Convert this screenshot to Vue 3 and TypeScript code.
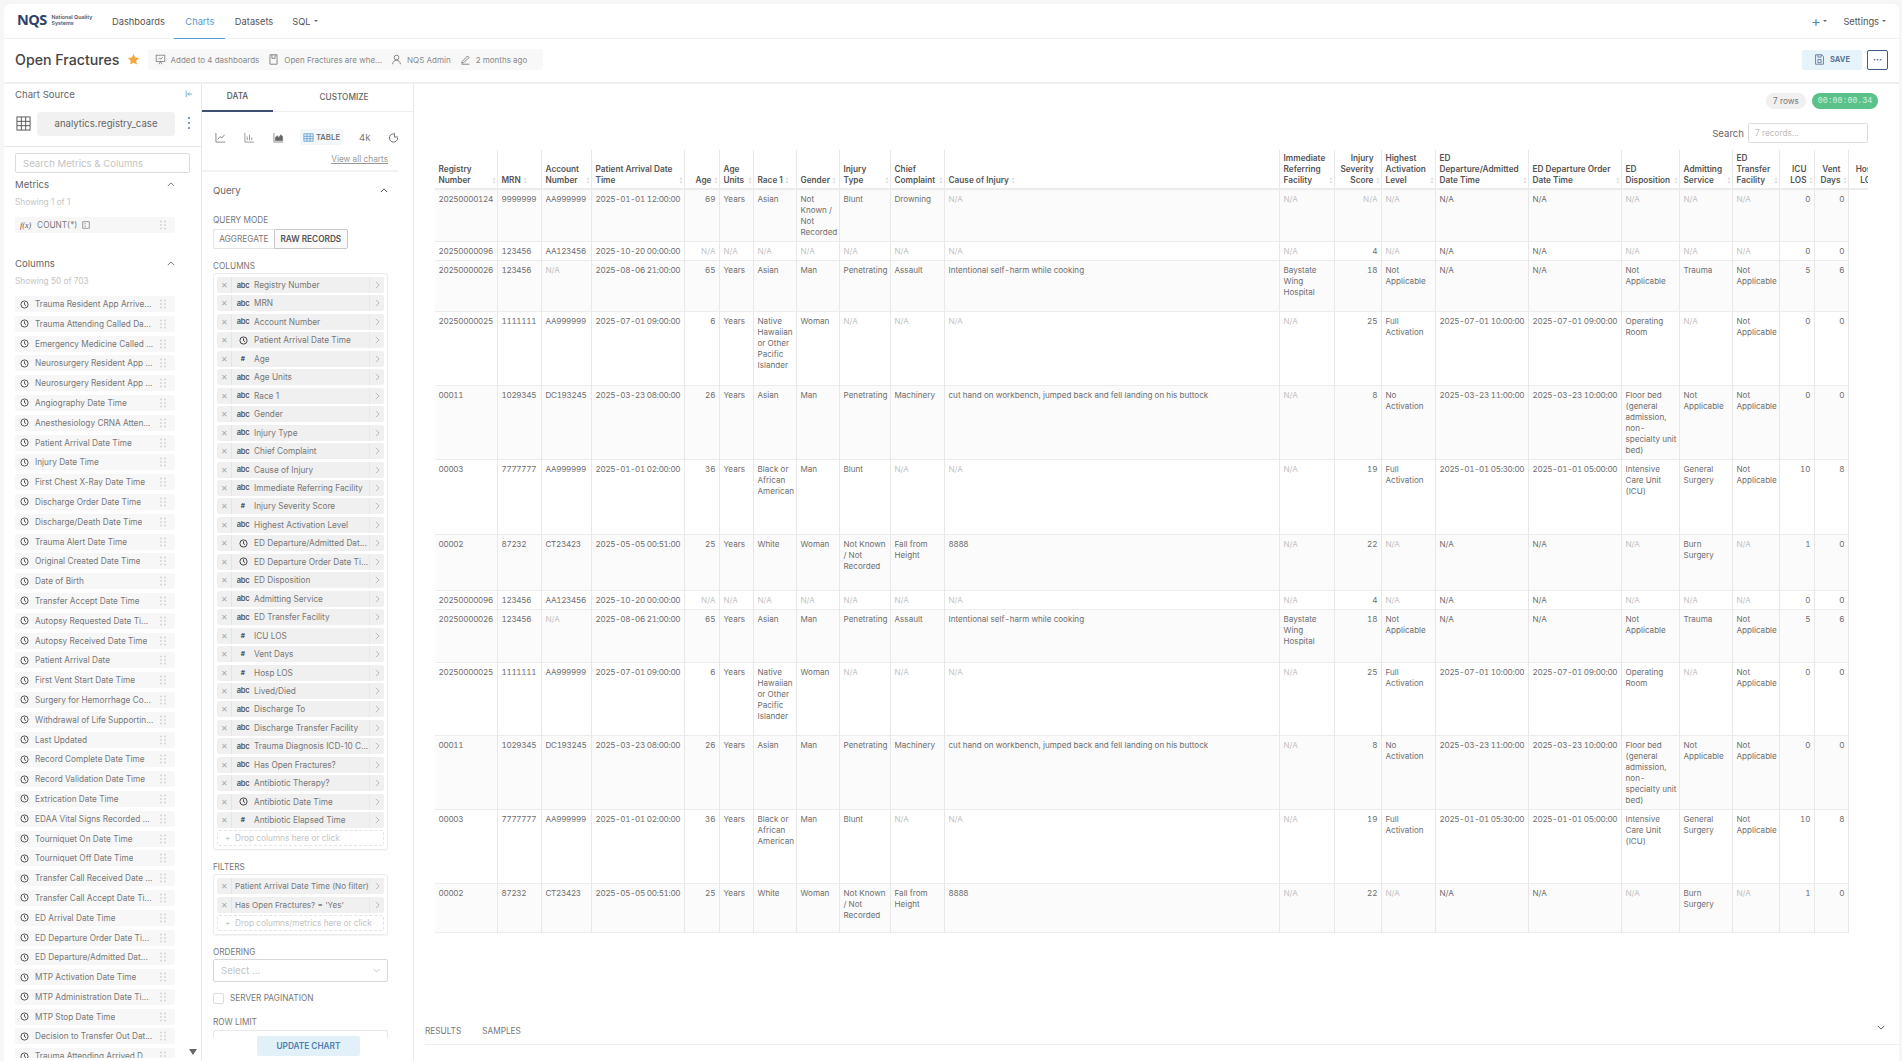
<script setup lang="ts">
interface ColDef { label: string; w: number; num?: boolean; dark?: boolean }
const cols: ColDef[] = [
  { label: 'Registry Number', w: 63 }, { label: 'MRN', w: 44 }, { label: 'Account Number', w: 50 },
  { label: 'Patient Arrival Date Time', w: 93 }, { label: 'Age', w: 35, num: true }, { label: 'Age Units', w: 34 },
  { label: 'Race 1', w: 43 }, { label: 'Gender', w: 43 }, { label: 'Injury Type', w: 51 },
  { label: 'Chief Complaint', w: 54 }, { label: 'Cause of Injury', w: 335 },
  { label: 'Immediate Referring Facility', w: 55 }, { label: 'Injury Severity Score', w: 47, num: true },
  { label: 'Highest Activation Level', w: 54 }, { label: 'ED Departure/Admitted Date Time', w: 93, dark: true },
  { label: 'ED Departure Order Date Time', w: 93, dark: true }, { label: 'ED Disposition', w: 58 },
  { label: 'Admitting Service', w: 53 }, { label: 'ED Transfer Facility', w: 47 },
  { label: 'ICU LOS', w: 35, num: true }, { label: 'Vent Days', w: 34, num: true }, { label: 'Hosp LOS', w: 36, num: true }
]
const NA = 'N/A'
const r1 = ['20250000124','9999999','AA999999','2025-01-01 12:00:00','69','Years','Asian','Not Known / Not Recorded','Blunt','Drowning',NA,NA,NA,NA,NA,NA,NA,NA,NA,'0','0']
const r2 = ['20250000096','123456','AA123456','2025-10-20 00:00:00',NA,NA,NA,NA,NA,NA,NA,NA,'4',NA,NA,NA,NA,NA,NA,'0','0']
const r3 = ['20250000026','123456',NA,'2025-08-06 21:00:00','65','Years','Asian','Man','Penetrating','Assault','Intentional self-harm while cooking','Baystate Wing Hospital','18','Not Applicable',NA,NA,'Not Applicable','Trauma','Not Applicable','5','6']
const r4 = ['20250000025','1111111','AA999999','2025-07-01 09:00:00','6','Years','Native Hawaiian or Other Pacific Islander','Woman',NA,NA,NA,NA,'25','Full Activation','2025-07-01 10:00:00','2025-07-01 09:00:00','Operating Room',NA,'Not Applicable','0','0']
const r5 = ['00011','1029345','DC193245','2025-03-23 08:00:00','26','Years','Asian','Man','Penetrating','Machinery','cut hand on workbench, jumped back and fell landing on his buttock',NA,'8','No Activation','2025-03-23 11:00:00','2025-03-23 10:00:00','Floor bed (general admission, non-specialty unit bed)','Not Applicable','Not Applicable','0','0']
const r6 = ['00003','7777777','AA999999','2025-01-01 02:00:00','36','Years','Black or African American','Man','Blunt',NA,NA,NA,'19','Full Activation','2025-01-01 05:30:00','2025-01-01 05:00:00','Intensive Care Unit (ICU)','General Surgery','Not Applicable','10','8']
const r7 = ['00002','87232','CT23423','2025-05-05 00:51:00','25','Years','White','Woman','Not Known / Not Recorded','Fall from Height','8888',NA,'22',NA,NA,NA,NA,'Burn Surgery',NA,'1','0']
const rows = [
  { h: 52, c: r1 }, { h: 19, c: r2 }, { h: 51, c: r3 }, { h: 74, c: r4 }, { h: 74, c: r5 }, { h: 75, c: r6 }, { h: 56, c: r7 },
  { h: 19, c: r2 }, { h: 53, c: r3 }, { h: 73, c: r4 }, { h: 74, c: r5 }, { h: 74, c: r6 }, { h: 49, c: r7 }
]
const isCode = (v: string) => /\d{3}/.test(v)
const leftCols = ['Trauma Resident App Arrive...','Trauma Attending Called Da...','Emergency Medicine Called ...','Neurosurgery Resident App ...','Neurosurgery Resident App ...','Angiography Date Time','Anesthesiology CRNA Atten...','Patient Arrival Date Time','Injury Date Time','First Chest X-Ray Date Time','Discharge Order Date Time','Discharge/Death Date Time','Trauma Alert Date Time','Original Created Date Time','Date of Birth','Transfer Accept Date Time','Autopsy Requested Date Ti...','Autopsy Received Date Time','Patient Arrival Date','First Vent Start Date Time','Surgery for Hemorrhage Co...','Withdrawal of Life Supportin...','Last Updated','Record Complete Date Time','Record Validation Date Time','Extrication Date Time','EDAA Vital Signs Recorded ...','Tourniquet On Date Time','Tourniquet Off Date Time','Transfer Call Received Date ...','Transfer Call Accept Date Ti...','ED Arrival Date Time','ED Departure Order Date Ti...','ED Departure/Admitted Dat...','MTP Activation Date Time','MTP Administration Date Ti...','MTP Stop Date Time','Decision to Transfer Out Dat...','Trauma Attending Arrived D...']
type Kind = 'abc' | 'time' | 'num'
const queryCols: { t: Kind; n: string }[] = [
  { t: 'abc', n: 'Registry Number' }, { t: 'abc', n: 'MRN' }, { t: 'abc', n: 'Account Number' }, { t: 'time', n: 'Patient Arrival Date Time' },
  { t: 'num', n: 'Age' }, { t: 'abc', n: 'Age Units' }, { t: 'abc', n: 'Race 1' }, { t: 'abc', n: 'Gender' }, { t: 'abc', n: 'Injury Type' },
  { t: 'abc', n: 'Chief Complaint' }, { t: 'abc', n: 'Cause of Injury' }, { t: 'abc', n: 'Immediate Referring Facility' }, { t: 'num', n: 'Injury Severity Score' },
  { t: 'abc', n: 'Highest Activation Level' }, { t: 'time', n: 'ED Departure/Admitted Dat...' }, { t: 'time', n: 'ED Departure Order Date Ti...' }, { t: 'abc', n: 'ED Disposition' },
  { t: 'abc', n: 'Admitting Service' }, { t: 'abc', n: 'ED Transfer Facility' }, { t: 'num', n: 'ICU LOS' }, { t: 'num', n: 'Vent Days' }, { t: 'num', n: 'Hosp LOS' },
  { t: 'abc', n: 'Lived/Died' }, { t: 'abc', n: 'Discharge To' }, { t: 'abc', n: 'Discharge Transfer Facility' }, { t: 'abc', n: 'Trauma Diagnosis ICD-10 C...' },
  { t: 'abc', n: 'Has Open Fractures?' }, { t: 'abc', n: 'Antibiotic Therapy?' }, { t: 'time', n: 'Antibiotic Date Time' }, { t: 'num', n: 'Antibiotic Elapsed Time' }
]
const filters = ['Patient Arrival Date Time (No filter)', "Has Open Fractures? = 'Yes'"]
const gridDots = [[2, 1.5], [6, 1.5], [2, 5], [6, 5], [2, 8.5], [6, 8.5]]
</script>

<template>
  <div class="app">
    <nav class="nav">
      <div class="logo">
        <span class="logo-mark">NQS</span>
        <span class="logo-sub">National Quality<br />Systems</span>
      </div>
      <a class="nav-link">Dashboards</a>
      <a class="nav-link active">Charts</a>
      <a class="nav-link">Datasets</a>
      <a class="nav-link">SQL <i class="caret"></i></a>
      <div class="nav-right">
        <span class="plus">+</span><i class="caret"></i>
        <span class="settings">Settings</span><i class="caret"></i>
      </div>
    </nav>

    <header class="head">
      <h1 class="title">Open Fractures</h1>
      <svg class="star" viewBox="0 0 24 24" width="13" height="13"><path fill="#f5a742" d="M12 1.8l3.1 6.6 7.2.9-5.3 5 1.4 7.1L12 18l-6.4 3.4L7 14.3l-5.3-5 7.2-.9z" /></svg>
      <div class="meta">
        <svg viewBox="0 0 14 14" width="11" height="11" fill="none" stroke="#777" stroke-width="1"><rect x="1.5" y="1.5" width="11" height="8" /><path d="M4 7l2-2 1.5 1.5L10 4M5 13l2-3.5L9 13" /></svg>
        <span class="meta-t">Added to 4 dashboards</span>
        <svg class="meta-i" viewBox="0 0 14 14" width="11" height="11" fill="none" stroke="#777" stroke-width="1.1"><path d="M2.5 1h9v12h-9zM5 1v4.5h4V1" /></svg>
        <span class="meta-t">Open Fractures are whe...</span>
        <svg class="meta-i" viewBox="0 0 14 14" width="11" height="11" fill="none" stroke="#777" stroke-width="1.1"><circle cx="7" cy="4.5" r="3" /><path d="M2 13c.5-3.5 2.500-5 5-5s4.500 1.500 5 5" /></svg>
        <span class="meta-t">NQS Admin</span>
        <svg class="meta-i" viewBox="0 0 14 14" width="11" height="11" fill="none" stroke="#777" stroke-width="1.1"><path d="M3 9.500l6.500-7 2 2-7 6.500-2.500.5zM2 13h10" /></svg>
        <span class="meta-t">2 months ago</span>
      </div>
      <div class="head-right">
        <button class="save">
          <svg viewBox="0 0 14 14" width="11" height="11" fill="none" stroke="#5a7394" stroke-width="1.1"><path d="M2 1h8l2 2v10H2zM5 1v3h4V1M5 7h4v4H5z" /></svg>
          SAVE
        </button>
        <button class="more">···</button>
      </div>
    </header>

    <main class="body">
      <aside class="left">
        <div class="left-title">
          <span>Chart Source</span>
          <svg viewBox="0 0 10 10" width="8" height="8" fill="none" stroke="#5b9bd0" stroke-width="1"><path d="M1.500 1v8M9 5H3.500M5.500 3L3.500 5l2 2" /></svg>
        </div>
        <div class="source">
          <svg viewBox="0 0 16 16" width="15" height="15" fill="none" stroke="#555" stroke-width="1"><rect x="1" y="1" width="14" height="14" /><path d="M1 5.700h14M1 10.300h14M5.700 1v14M10.300 1v14" /></svg>
          <span class="source-name">analytics.registry_case</span>
          <span class="kebab"><i></i><i></i><i></i></span>
        </div>
        <div class="left-inner">
          <input class="search" placeholder="Search Metrics &amp; Columns" />
          <div class="sec-head first"><span>Metrics</span><svg viewBox="0 0 10 6" width="8" height="5" fill="none" stroke="#666" stroke-width="1.100"><path d="M1 5l4-4 4 4" /></svg></div>
          <div class="showing">Showing 1 of 1</div>
          <div class="item metric">
            <span class="fx">f(x)</span>
            <span class="item-label">COUNT(*)</span>
            <svg class="calc" viewBox="0 0 10 10" width="8" height="8" fill="none" stroke="#666" stroke-width="0.800"><rect x="1" y="1" width="8" height="8" /><path d="M3 3.500h2M3 6.500h2" /></svg>
            <svg class="grip" viewBox="0 0 8 10" width="8" height="10"><circle v-for="(d, i) in gridDots" :key="i" :cx="d[0]" :cy="d[1]" r="1" fill="#d4d4d4" /></svg>
          </div>
          <div class="sec-head cols-head"><span>Columns</span><svg viewBox="0 0 10 6" width="8" height="5" fill="none" stroke="#666" stroke-width="1.100"><path d="M1 5l4-4 4 4" /></svg></div>
          <div class="showing">Showing 50 of 703</div>
          <div class="col-list">
            <div v-for="(c, i) in leftCols" :key="i" class="item">
              <svg class="clock" viewBox="0 0 12 12" width="9" height="9" fill="none" stroke="#444" stroke-width="1.200"><circle cx="6" cy="6" r="4.800" /><path d="M6 3v3.200l2 1.300" /></svg>
              <span class="item-label">{{ c }}</span>
              <svg class="grip" viewBox="0 0 8 10" width="8" height="10"><circle v-for="(d, j) in gridDots" :key="j" :cx="d[0]" :cy="d[1]" r="1" fill="#d4d4d4" /></svg>
            </div>
          </div>
        </div>
        <i class="scroll-arrow"></i>
      </aside>

      <section class="mid">
        <div class="tabs">
          <span class="tab on">DATA</span>
          <span class="tab">CUSTOMIZE</span>
        </div>
        <div class="mid-inner">
          <div class="viz-strip">
            <svg viewBox="0 0 12 12" width="11" height="11" fill="none" stroke="#777" stroke-width="0.900"><path d="M1 1v10h10M3 8l2.500-3 2 1.500L10.500 3" /></svg>
            <svg viewBox="0 0 12 12" width="11" height="11" fill="none" stroke="#888" stroke-width="0.900"><path d="M1 1v10h10M3.500 9V5M6 9V3M8.500 9V6" /></svg>
            <svg viewBox="0 0 12 12" width="11" height="11" fill="#666" stroke="#777" stroke-width="0.800"><path fill="none" d="M1 1v10h10" /><path d="M2.500 9.500V6l2-2 2 2 2-3 2 2v4.500z" /></svg>
            <span class="viz-chip">
              <svg viewBox="0 0 12 12" width="11" height="11" fill="none" stroke="#5b9bd0" stroke-width="0.900"><rect x="1" y="2" width="10" height="8" /><path d="M1 4.700h10M1 7.300h10M4.300 2v8M7.700 2v8" /></svg>
              TABLE
            </span>
            <span class="viz-4k">4k</span>
            <svg class="viz-pie" viewBox="0 0 12 12" width="11" height="11" fill="none" stroke="#666" stroke-width="1"><path d="M6 2a4.500 4.500 0 1 0 4.500 4.500" /><path d="M7 1v4.500h4" /></svg>
          </div>
          <div class="view-all"><a>View all charts</a></div>
          <div class="query">
            <div class="query-head"><span>Query</span><svg viewBox="0 0 10 6" width="8" height="5" fill="none" stroke="#444" stroke-width="1.200"><path d="M1 5l4-4 4 4" /></svg></div>
            <label class="ctl-label qm">QUERY MODE</label>
            <div class="mode">
              <span class="mode-b">AGGREGATE</span>
              <span class="mode-b sel">RAW RECORDS</span>
            </div>
            <label class="ctl-label cl">COLUMNS</label>
            <div class="ctl-box">
              <div v-for="c in queryCols" :key="c.n" class="pill">
                <span class="pill-x">✕</span>
                <span class="pill-type">
                  <span v-if="c.t === 'abc'" class="abc">abc</span>
                  <svg v-else-if="c.t === 'time'" viewBox="0 0 12 12" width="9" height="9" fill="none" stroke="#333" stroke-width="1.200"><circle cx="6" cy="6" r="4.800" /><path d="M6 3v3.200l2 1.300" /></svg>
                  <span v-else class="hash">#</span>
                </span>
                <span class="pill-text">{{ c.n }}</span>
                <span class="pill-go"><svg viewBox="0 0 6 10" width="5" height="8" fill="none" stroke="#aaa" stroke-width="1"><path d="M1 1l4 4-4 4" /></svg></span>
              </div>
              <div class="drop tight">+&nbsp; Drop columns here or click</div>
            </div>
            <label class="ctl-label fl">FILTERS</label>
            <div class="ctl-box">
              <div v-for="f in filters" :key="f" class="pill">
                <span class="pill-x">✕</span>
                <span class="pill-text f">{{ f }}</span>
                <span class="pill-go"><svg viewBox="0 0 6 10" width="5" height="8" fill="none" stroke="#aaa" stroke-width="1"><path d="M1 1l4 4-4 4" /></svg></span>
              </div>
              <div class="drop">+&nbsp; Drop columns/metrics here or click</div>
            </div>
            <label class="ctl-label or">ORDERING</label>
            <div class="select">
              <span>Select ...</span>
              <svg viewBox="0 0 10 6" width="7" height="5" fill="none" stroke="#aaa" stroke-width="1"><path d="M1 1l4 4 4-4" /></svg>
            </div>
            <div class="check"><i></i><span>SERVER PAGINATION</span></div>
            <label class="ctl-label rl">ROW LIMIT</label>
            <div class="limit"></div>
          </div>
        </div>
        <button class="update">UPDATE CHART</button>
      </section>

      <section class="right">
        <div class="status">
          <span class="chip">7 rows</span>
          <span class="chip green">00:00:00.34</span>
        </div>
        <div class="search-row">
          <span>Search</span>
          <input class="tsearch" placeholder="7 records..." />
        </div>
        <div class="thead-clip">
          <table class="grid">
            <colgroup><col v-for="c in cols" :key="c.label" :style="{ width: c.w + 'px' }" /></colgroup>
            <thead>
              <tr>
                <th v-for="c in cols" :key="c.label">
                  <div class="th" :class="{ num: c.num }">
                    <span>{{ c.label }}</span>
                    <svg class="sort" viewBox="0 0 6 10" width="4" height="7"><path fill="#ddd" d="M3 0l2.500 4h-5zM3 10L.5 6h5z" /></svg>
                  </div>
                </th>
              </tr>
            </thead>
          </table>
        </div>
        <div class="tbody-clip">
          <table class="grid">
            <colgroup><col v-for="c in cols" :key="c.label" :style="{ width: c.w + 'px' }" /></colgroup>
            <tbody>
              <tr v-for="(r, ri) in rows" :key="ri" :class="{ odd: ri % 2 === 0 }" :style="{ height: r.h + 'px' }">
                <td
                  v-for="(v, ci) in r.c"
                  :key="ci"
                  :class="{ num: cols[ci].num, na: v === 'N/A' && !cols[ci].dark, code: isCode(v) }"
                >{{ v }}</td>
              </tr>
            </tbody>
          </table>
        </div>
        <div class="bottom">
          <span class="b-tab">RESULTS</span>
          <span class="b-tab">SAMPLES</span>
          <svg class="b-chev" viewBox="0 0 10 6" width="8" height="5" fill="none" stroke="#555" stroke-width="1.200"><path d="M1 1l4 4 4-4" /></svg>
        </div>
      </section>
    </main>
  </div>
</template>

<style>
html, body { margin: 0; background: #f6f6f6; overflow: hidden; }
</style>

<style scoped>
.app {
  box-sizing: border-box;
  margin: 4px 3px 0 4px;
  height: 1057px;
  background: #fff;
  border-radius: 6px 6px 0 0;
  font-family: Inter, "Liberation Sans", sans-serif;
  color: #666;
  font-size: 8.25px;
  display: flex;
  flex-direction: column;
  overflow: hidden;
}
.nav {
  height: 34px;
  flex: none;
  display: flex;
  align-items: stretch;
  border-bottom: 1px solid #f0f0f0;
  font-size: 9.3px;
  color: #555;
}
.logo { display: flex; align-items: center; gap: 5px; width: 98.5px; padding-left: 13px; box-sizing: border-box; flex: none; margin-top: -3px; }
.logo-mark { font-family: "Open Sans", sans-serif; font-size: 14.5px; font-weight: 700; letter-spacing: -0.6px; color: #2f4267; }
.logo-sub { font-size: 5.3px; line-height: 6px; color: #556; font-weight: 600; white-space: nowrap; }
.nav-link { padding: 0 9.5px; display: flex; align-items: center; gap: 3px; box-sizing: border-box; height: 34px; }
.nav-link.active { color: #5b9bd0; border-bottom: 1px solid #5b9bd0; height: 35px; width: 51px; justify-content: center; padding: 0; }
.caret { display: inline-block; width: 0; height: 0; border-left: 2px solid transparent; border-right: 2px solid transparent; border-top: 2.500px solid #666; }
.nav-right { margin-left: auto; display: flex; align-items: center; gap: 3px; padding-right: 13px; }
.plus { color: #4a87bd; font-size: 14px; line-height: 14px; }
.settings { margin-left: 13px; }
.head {
  flex: none;
  box-sizing: border-box;
  border-bottom: 2px solid #efefef;
  display: flex;
  align-items: center;
  padding: 3px 11px 5px 11px;
  height: 45px;
}
.title { margin: 0; font-size: 14.2px; font-weight: 500; color: #444; line-height: 18px; white-space: nowrap; }
.star { margin-left: 7px; flex: none; }
.meta { margin-left: 8px; height: 21px; width: 395px; box-sizing: border-box; background: #f8f8f8; border-radius: 3px; display: flex; align-items: center; padding: 0 7px; color: #888; font-size: 8px; white-space: nowrap; }
.meta-t { margin-left: 5px; }
.meta-i { margin-left: 9px; }
.head-right { margin-left: auto; display: flex; gap: 5px; }
.save { width: 60px; height: 20px; border: 0; border-radius: 2px; background: #e6f3fa; color: #5a7394; font: 700 7.500px Inter, sans-serif; display: flex; align-items: center; justify-content: center; gap: 5px; }
.more { width: 21px; height: 20px; border: 1px solid #3f5a84; border-radius: 2px; background: #fff; color: #3f5a84; font: 700 9px Inter, sans-serif; padding: 0; }
.body { flex: 1; min-height: 0; display: flex; }
.left { position: relative; width: 198px; flex: none; box-sizing: border-box; border-right: 1px solid #e8e8e8; overflow: hidden; display: flex; flex-direction: column; }
.left-title { height: 20px; display: flex; align-items: center; justify-content: space-between; padding: 0 8px 0 11px; font-size: 9.600px; color: #666; flex: none; }
.source { height: 43px; flex: none; box-sizing: border-box; border-bottom: 1px solid #e8e8e8; display: flex; align-items: flex-start; padding: 8px 0 0 12px; }
.source > svg { margin: 4px 6px 0 0; }
.source-name { width: 138px; height: 24px; background: #f1f1f1; border-radius: 3px; text-align: center; line-height: 24px; font-size: 9.600px; color: #666; }
.kebab { display: flex; flex-direction: column; gap: 3px; margin: 5px 0 0 13px; }
.kebab i { width: 2px; height: 2px; border-radius: 50%; background: #4a7fb0; }
.left-inner { padding: 6px 0 0 11px; flex: 1; min-height: 0; overflow: hidden; margin-bottom: 3px; }
.search { display: block; box-sizing: border-box; width: 175px; height: 20px; border: 1px solid #dcdcdc; border-radius: 2px; padding: 0 7px; font: 9.600px Inter, sans-serif; outline: 0; }
.search::placeholder { color: #c4c4c4; }
.sec-head { display: flex; justify-content: space-between; align-items: center; width: 160px; font-size: 9.600px; color: #666; height: 14px; box-sizing: border-box; }
.sec-head.first { margin-top: 4px; }
.cols-head { margin-top: 23px; }
.showing { font-size: 8.250px; color: #c4c4c4; margin-top: 6px; height: 11px; line-height: 11px; }
.item { width: 160px; height: 16px; box-sizing: border-box; background: #f7f7f7; border-radius: 2px; display: flex; align-items: center; padding: 0 8px 0 5px; font-size: 8.250px; color: #777; white-space: nowrap; }
.metric { margin: 9px 0 0 0; }
.item-label { margin-left: 6px; overflow: hidden; }
.fx { font-family: "Liberation Serif", serif; font-style: italic; font-size: 8px; color: #555; }
.calc { margin-left: 5px; }
.grip { margin-left: auto; flex: none; }
.clock { flex: none; }
.col-list { display: flex; flex-direction: column; gap: 3.800px; margin-top: 9px; }
.scroll-arrow { position: absolute; left: 185px; bottom: 6px; width: 0; height: 0; border-left: 4px solid transparent; border-right: 4px solid transparent; border-top: 6px solid #666; }
.mid { position: relative; width: 212px; flex: none; box-sizing: border-box; border-right: 1px solid #e8e8e8; overflow: hidden; display: flex; flex-direction: column; }
.tabs { display: flex; height: 28px; flex: none; box-sizing: border-box; border-bottom: 1px solid #eee; font-size: 8.250px; font-weight: 500; color: #666; }
.tab { display: flex; align-items: center; justify-content: center; width: 71px; height: 28px; box-sizing: border-box; padding-bottom: 2px; }
.tab + .tab { width: 127px; padding-left: 15px; }
.tab.on { border-bottom: 2px solid #3f4f74; color: #555; }
.mid-inner { width: 196px; flex: 1; min-height: 0; overflow: hidden; }
.viz-strip { height: 16px; margin-top: 17px; display: flex; align-items: center; padding-left: 13px; overflow: hidden; }
.viz-strip > svg { margin-right: 18px; flex: none; }
.viz-strip > svg:nth-child(3) { margin-right: 16px; }
.viz-chip { width: 43px; height: 16px; background: #f3f7fa; border-radius: 2px; display: flex; align-items: center; justify-content: center; gap: 2px; font-size: 7.800px; color: #666; font-weight: 500; flex: none; }
.viz-4k { margin-left: 16px; font-size: 9.600px; color: #777; width: 13px; flex: none; }
.viz-strip .viz-pie { margin: 0 0 0 16px; }
.view-all { text-align: right; padding-right: 10px; height: 16px; line-height: 11px; margin-top: 9px; box-sizing: border-box; font-size: 8.250px; color: #999; }
.view-all a { text-decoration: underline; }
.query { border-top: 2px solid #f2f2f2; padding: 0 0 0 11px; }
.query-head { display: flex; justify-content: space-between; align-items: center; height: 12px; margin-top: 12px; font-size: 9.600px; color: #666; width: 175px; box-sizing: border-box; }
.ctl-label { display: block; font-size: 8.250px; color: #777; line-height: 11px; height: 11px; }
.qm { margin-top: 19px; }
.mode { display: flex; width: 135px; height: 20px; margin-top: 3px; box-sizing: border-box; font-size: 8.250px; color: #777; }
.mode-b { display: flex; align-items: center; justify-content: center; width: 61px; border: 1px solid #e4e4e4; border-radius: 2px 0 0 2px; border-right: 0; }
.mode-b.sel { width: 74px; border: 1px solid #c8c8c8; border-radius: 0 2px 2px 0; background: #fafafa; color: #555; font-weight: 600; }
.cl { margin-top: 11.500px; }
.ctl-box { width: 175px; box-sizing: border-box; margin-top: 1.500px; border: 1px solid #ececec; border-radius: 3px; padding: 3px; display: flex; flex-direction: column; gap: 2.460px; box-shadow: 0 1px 1px #f4f4f4; }
.pill { height: 16px; flex: none; background: #f0f0f0; border-radius: 2px; display: flex; align-items: center; font-size: 8.250px; color: #777; white-space: nowrap; }
.pill-x { width: 15px; flex: none; border-right: 1px solid #e4e4e4; height: 16px; line-height: 16px; text-align: center; font-size: 8px; color: #aaa; box-sizing: border-box; }
.pill-type { width: 22px; flex: none; text-align: center; display: flex; align-items: center; justify-content: center; }
.abc { font-size: 7.500px; font-weight: 600; color: #555; letter-spacing: -0.3px; }
.hash { font-size: 6.500px; font-weight: 800; color: #555; }
.pill-text { flex: 1; min-width: 0; overflow: hidden; }
.pill-text.f { padding-left: 3px; font-size: 8.100px; }
.pill-go { width: 15px; flex: none; height: 16px; border-left: 1px solid #e8e8e8; display: flex; align-items: center; justify-content: center; box-sizing: border-box; }
.drop { height: 16px; flex: none; border: 1px dashed #e4e4e4; border-radius: 2px; box-sizing: border-box; padding-left: 7px; line-height: 14px; font-size: 8.250px; color: #c4c4c4; }
.drop.tight { margin-top: -0.500px; }
.fl { margin-top: 12px; }
.fl + .ctl-box { margin-top: 1px; }
.or { margin-top: 11.500px; }
.select { width: 175px; height: 23px; margin-top: 1px; border: 1px solid #d8d8d8; border-radius: 2px; box-sizing: border-box; display: flex; align-items: center; justify-content: space-between; padding: 0 7px; font-size: 9.600px; color: #c4c4c4; }
.check { display: flex; align-items: center; gap: 6px; margin-top: 10px; font-size: 8.250px; color: #777; height: 13px; }
.check i { width: 11px; height: 11px; border: 1px solid #dcdcdc; border-radius: 2px; box-sizing: border-box; }
.rl { margin-top: 12px; }
.limit { width: 175px; height: 8px; margin-top: 2px; border: 1px solid #e8e8e8; border-bottom: 0; border-radius: 3px 3px 0 0; box-sizing: border-box; }
.update { position: absolute; left: 55px; bottom: 5px; width: 103px; height: 20px; border: 0; border-radius: 2px; background: #e2f1f9; color: #4a7fb0; font: 600 8.250px Inter, sans-serif; }
.right { flex: 1; min-width: 0; display: flex; flex-direction: column; }
.status { display: flex; justify-content: flex-end; gap: 6px; padding: 9px 21px 0 0; height: 16px; flex: none; }
.chip { height: 16px; width: 40px; border-radius: 8px; background: #f0f0f0; text-align: center; line-height: 16px; font-size: 8.250px; color: #777; }
.chip.green { width: 66px; background: #5ac189; color: #d8f2e4; font-family: "Liberation Mono", monospace; font-size: 8.250px; }
.search-row { display: flex; justify-content: flex-end; align-items: center; gap: 4px; height: 20px; margin-top: 14px; padding-right: 31px; font-size: 9.600px; color: #666; flex: none; }
.tsearch { width: 120px; height: 20px; box-sizing: border-box; border: 1px solid #dcdcdc; border-radius: 2px; padding: 0 6px; font: 8.250px Inter, sans-serif; outline: 0; }
.tsearch::placeholder { color: #bbb; }
.thead-clip { margin: 7px 0 0 21px; width: 1433px; height: 40px; overflow: hidden; flex: none; }
.tbody-clip { margin-left: 21px; width: 1418px; overflow: hidden; flex: none; height: 743px; }
.grid { table-layout: fixed; width: 1450px; border-collapse: separate; border-spacing: 0; }
th { box-sizing: border-box; height: 40px; padding: 0 1.500px 2px 3.500px; border-right: 1px solid #e8e8e8; border-bottom: 2px solid #ececec; vertical-align: bottom; text-align: left; font-weight: 600; font-size: 8.250px; line-height: 11px; color: #555; }
.th { display: flex; align-items: flex-end; gap: 2px; }
.th span { min-width: 0; }
.th.num { justify-content: flex-end; text-align: right; }
.sort { flex: none; margin-bottom: 2px; }
td { box-sizing: border-box; padding: 4px 1px 0 3.500px; vertical-align: top; border-right: 1px solid #e8e8e8; border-bottom: 1.500px solid #ececec; line-height: 11px; font-size: 8.100px; color: #6e6e6e; overflow: hidden; font-variant-numeric: tabular-nums; }
td.code { white-space: nowrap; letter-spacing: -0.3px; }
tr.odd td { background: #fbfbfb; }
td.num { text-align: right; padding-right: 3.500px; }
td.na { color: #c2c2c2; }
.bottom { margin-top: auto; position: relative; height: 30px; box-sizing: border-box; margin-left: 11px; margin-bottom: 16px; border-bottom: 1px solid #efefef; display: flex; gap: 21px; font-size: 8.250px; color: #777; align-items: flex-start; padding-top: 11px; }
.b-chev { position: absolute; right: 14px; top: 10px; }
</style>
